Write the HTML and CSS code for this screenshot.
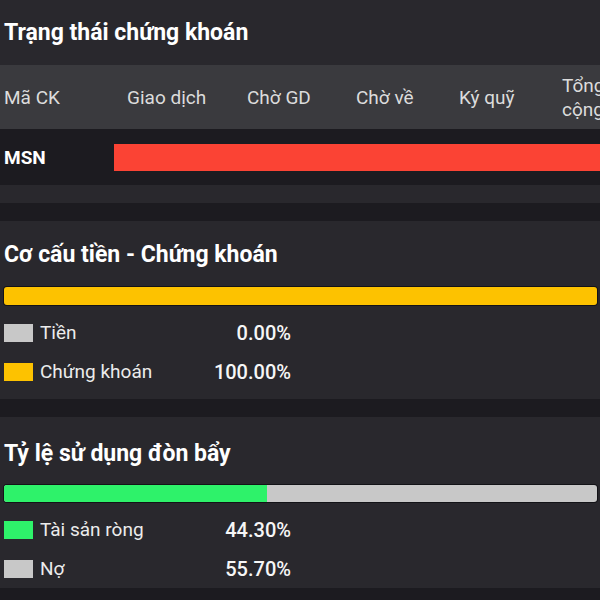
FILE: index.html
```html
<!DOCTYPE html>
<html lang="vi">
<head>
<meta charset="utf-8">
<link rel="stylesheet" href="styles.css">
</head>
<body>
<section class="panel panel-stock">
  <h2 class="title">Trạng thái chứng khoán</h2>
  <div class="thead">
    <div class="th">Mã CK</div>
    <div class="th">Giao dịch</div>
    <div class="th">Chờ GD</div>
    <div class="th">Chờ về</div>
    <div class="th">Ký quỹ</div>
    <div class="th th-last">Tổng cộng</div>
  </div>
  <div class="trow">
    <div class="code">MSN</div>
    <div class="red-bar"></div>
  </div>
</section>

<section class="panel panel-mix">
  <h2 class="title">Cơ cấu tiền - Chứng khoán</h2>
  <div class="bar"><div class="seg seg-yellow" style="width:100%"></div></div>
  <div class="legend">
    <div class="lrow"><span class="sw sw-gray"></span><span class="lname">Tiền</span><span class="lval">0.00%</span></div>
    <div class="lrow"><span class="sw sw-yellow"></span><span class="lname">Chứng khoán</span><span class="lval">100.00%</span></div>
  </div>
</section>

<section class="panel panel-lev">
  <h2 class="title">Tỷ lệ sử dụng đòn bẩy</h2>
  <div class="bar bar-gray"><div class="seg seg-green" style="width:44.3%"></div></div>
  <div class="legend">
    <div class="lrow"><span class="sw sw-green"></span><span class="lname">Tài sản ròng</span><span class="lval">44.30%</span></div>
    <div class="lrow"><span class="sw sw-gray"></span><span class="lname">Nợ</span><span class="lval">55.70%</span></div>
  </div>
</section>
</body>
</html>
```
FILE: styles.css
```css
* { box-sizing: border-box; }
html, body {
  margin: 0;
  padding: 0;
  background: #1c1b20;
  overflow: hidden;
  font-family: Roboto, "Noto Sans", sans-serif;
  color: #ececec;
}
.panel {
  background: #29282d;
  margin-bottom: 18px;
}
.panel-stock { padding-bottom: 18px; }
.panel-mix { padding-bottom: 8px; }
.title {
  margin: 0;
  height: 66px;
  display: flex;
  align-items: center;
  padding-left: 4px;
  font-size: 23px;
  font-weight: 700;
  color: #ffffff;
}
.panel-stock .title { height: 65px; }
.panel-lev .title { height: 68px; padding-top: 4px; }

.thead {
  display: grid;
  grid-template-columns: 123px 120px 109px 103px 103px 44px;
  align-items: center;
  height: 64px;
  background: #3a3a3e;
  padding-left: 4px;
  width: 700px;
}
.th {
  font-size: 19px;
  line-height: 24px;
  color: #dcdcdc;
  padding-top: 2px;
}
.trow {
  display: flex;
  align-items: center;
  height: 56px;
  background: #1c1b20;
  padding-left: 4px;
  width: 700px;
}
.code {
  width: 110px;
  font-size: 19px;
  font-weight: 700;
  color: #fff;
}
.red-bar {
  flex: 1;
  height: 27px;
  background: #fb4334;
}

.bar {
  margin: 0 3px 0 4px;
  height: 18px;
  border-radius: 3px;
  overflow: hidden;
  display: flex;
  box-shadow: 0 0 0 1px rgba(10, 10, 14, 0.7);
}
.bar-gray { background: #c8c8c8; height: 17px; }
.seg { height: 100%; }
.seg-yellow { background: #fdc200; }
.seg-green { background: #2ef26a; }

.legend { padding-top: 8px; }
.lrow {
  display: flex;
  align-items: center;
  height: 39px;
  padding-left: 4px;
  width: 291px;
}
.sw {
  width: 29px;
  height: 18px;
  margin-right: 7px;
  flex: none;
}
.sw-gray { background: #c8c8c8; }
.sw-yellow { background: #fdc200; }
.sw-green { background: #2ef26a; }
.lname {
  flex: 1;
  font-size: 19px;
  color: #ececec;
}
.lval {
  font-size: 20px;
  font-weight: 500;
  color: #f6f6f6;
}
```
